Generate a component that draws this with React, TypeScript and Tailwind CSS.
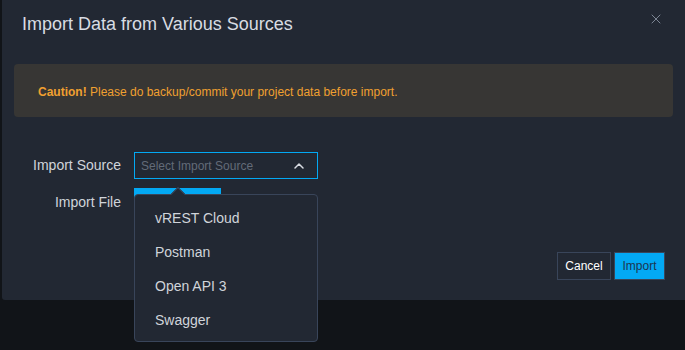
import { ChevronUp, X } from "lucide-react";

const SOURCES = ["vREST Cloud", "Postman", "Open API 3", "Swagger"];

export default function App() {
    return (
        <div className="h-[350px] w-[685px] overflow-hidden bg-[#111418] font-['Liberation_Sans',Arial,sans-serif]">
            <div className="relative ml-[2px] flex h-[300px] flex-col rounded-bl-[3px] bg-[#222833]">
                <div className="flex items-start justify-between pl-5 pr-[21px] pt-[12px]">
                    <h1 className="text-[18px] leading-[24px] text-[#d8dce2]">Import Data from Various Sources</h1>
                    <button className="mt-[-1px] text-[#7d8694]">
                        <X size={16} strokeWidth={1.5} />
                    </button>
                </div>

                <div className="mx-3 mt-[28px] flex h-[53px] items-center rounded-[4px] bg-[#373634] pl-[24px] pt-[3px]">
                    <p className="text-[12px] text-[#f0a030]">
                        <span className="font-bold">Caution!</span> Please do backup/commit your project data before import.
                    </p>
                </div>

                <div className="mt-[35px] flex flex-col gap-[11px]">
                    <div className="flex items-center">
                        <label className="w-[119px] text-right text-[14px] text-[#d0d4da]">Import Source</label>
                        <div className="ml-[13px] flex h-[27px] w-[184px] items-center justify-between border border-[#03a9f4] pl-[6px] pr-[10px]">
                            <span className="text-[12px] text-[#626b78]">Select Import Source</span>
                            <ChevronUp size={16} strokeWidth={2.25} className="text-[#d8dce2]" />
                        </div>
                    </div>
                    <div className="flex h-[24px] items-center">
                        <label className="w-[119px] text-right text-[14px] text-[#d0d4da]">Import File</label>
                        <div className="ml-[13px] h-[24px]">
                            <div className="mt-[-2px] h-[22px] w-[87px] bg-[#03a9f4]" />
                        </div>
                    </div>
                </div>

                <div className="mt-auto mb-[20px] flex justify-end gap-[3px] pr-[20px]">
                    <button className="h-[28px] w-[54px] border border-[#39455a] text-[12px] text-white">Cancel</button>
                    <button className="h-[28px] w-[51px] border border-[#39455a] bg-[#03a9f4] text-[12px] text-[#1d3550]">Import</button>
                </div>

                {/* open dropdown menu */}
                <div className="absolute left-[132px] top-[194px] w-[184px] rounded-[4px] border border-[#39455a] bg-[#222833] pb-[4px] pt-[6px]">
                    <div className="absolute left-[38px] top-[-6px] h-[10px] w-[10px] rotate-45 border-l border-t border-[#39455a] bg-[#222833]" />
                    {SOURCES.map((source) => (
                        <div key={source} className="flex h-[34px] items-center pl-[20px] text-[14px] text-[#d0d4da]">
                            {source}
                        </div>
                    ))}
                </div>
            </div>
        </div>
    );
}
